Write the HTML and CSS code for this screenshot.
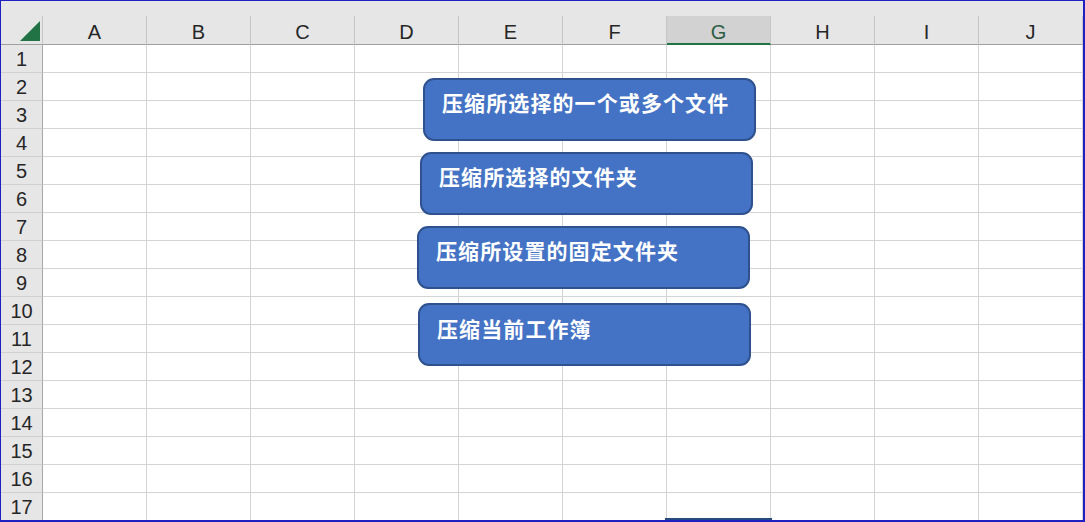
FILE: index.html
```html
<!DOCTYPE html>
<html lang="zh">
<head>
<meta charset="utf-8">
<title>Sheet</title>
<link rel="stylesheet" href="styles.css">
</head>
<body>
<div class="frame">
  <div class="strip"></div>
  <div class="sheet">
    <div class="corner"><svg width="42" height="28" viewBox="0 0 42 28"><polygon points="39,5 39,25 19,25" fill="#217346"/></svg></div>
    <div class="ch">A</div><div class="ch">B</div><div class="ch">C</div><div class="ch">D</div><div class="ch">E</div><div class="ch">F</div><div class="ch sel">G</div><div class="ch">H</div><div class="ch">I</div><div class="ch">J</div>

    <div class="rh">1</div><div class="c"></div><div class="c"></div><div class="c"></div><div class="c"></div><div class="c"></div><div class="c"></div><div class="c"></div><div class="c"></div><div class="c"></div><div class="c"></div>
    <div class="rh">2</div><div class="c"></div><div class="c"></div><div class="c"></div><div class="c"></div><div class="c"></div><div class="c"></div><div class="c"></div><div class="c"></div><div class="c"></div><div class="c"></div>
    <div class="rh">3</div><div class="c"></div><div class="c"></div><div class="c"></div><div class="c"></div><div class="c"></div><div class="c"></div><div class="c"></div><div class="c"></div><div class="c"></div><div class="c"></div>
    <div class="rh">4</div><div class="c"></div><div class="c"></div><div class="c"></div><div class="c"></div><div class="c"></div><div class="c"></div><div class="c"></div><div class="c"></div><div class="c"></div><div class="c"></div>
    <div class="rh">5</div><div class="c"></div><div class="c"></div><div class="c"></div><div class="c"></div><div class="c"></div><div class="c"></div><div class="c"></div><div class="c"></div><div class="c"></div><div class="c"></div>
    <div class="rh">6</div><div class="c"></div><div class="c"></div><div class="c"></div><div class="c"></div><div class="c"></div><div class="c"></div><div class="c"></div><div class="c"></div><div class="c"></div><div class="c"></div>
    <div class="rh">7</div><div class="c"></div><div class="c"></div><div class="c"></div><div class="c"></div><div class="c"></div><div class="c"></div><div class="c"></div><div class="c"></div><div class="c"></div><div class="c"></div>
    <div class="rh">8</div><div class="c"></div><div class="c"></div><div class="c"></div><div class="c"></div><div class="c"></div><div class="c"></div><div class="c"></div><div class="c"></div><div class="c"></div><div class="c"></div>
    <div class="rh">9</div><div class="c"></div><div class="c"></div><div class="c"></div><div class="c"></div><div class="c"></div><div class="c"></div><div class="c"></div><div class="c"></div><div class="c"></div><div class="c"></div>
    <div class="rh">10</div><div class="c"></div><div class="c"></div><div class="c"></div><div class="c"></div><div class="c"></div><div class="c"></div><div class="c"></div><div class="c"></div><div class="c"></div><div class="c"></div>
    <div class="rh">11</div><div class="c"></div><div class="c"></div><div class="c"></div><div class="c"></div><div class="c"></div><div class="c"></div><div class="c"></div><div class="c"></div><div class="c"></div><div class="c"></div>
    <div class="rh">12</div><div class="c"></div><div class="c"></div><div class="c"></div><div class="c"></div><div class="c"></div><div class="c"></div><div class="c"></div><div class="c"></div><div class="c"></div><div class="c"></div>
    <div class="rh">13</div><div class="c"></div><div class="c"></div><div class="c"></div><div class="c"></div><div class="c"></div><div class="c"></div><div class="c"></div><div class="c"></div><div class="c"></div><div class="c"></div>
    <div class="rh">14</div><div class="c"></div><div class="c"></div><div class="c"></div><div class="c"></div><div class="c"></div><div class="c"></div><div class="c"></div><div class="c"></div><div class="c"></div><div class="c"></div>
    <div class="rh">15</div><div class="c"></div><div class="c"></div><div class="c"></div><div class="c"></div><div class="c"></div><div class="c"></div><div class="c"></div><div class="c"></div><div class="c"></div><div class="c"></div>
    <div class="rh">16</div><div class="c"></div><div class="c"></div><div class="c"></div><div class="c"></div><div class="c"></div><div class="c"></div><div class="c"></div><div class="c"></div><div class="c"></div><div class="c"></div>
    <div class="rh">17</div><div class="c"></div><div class="c"></div><div class="c"></div><div class="c"></div><div class="c"></div><div class="c"></div><div class="c"></div><div class="c"></div><div class="c"></div><div class="c"></div>
  </div>

  <div class="shape s1">压缩所选择的一个或多个文件</div>
  <div class="shape s2">压缩所选择的文件夹</div>
  <div class="shape s3">压缩所设置的固定文件夹</div>
  <div class="shape s4">压缩当前工作簿</div>
  <div class="cursor"></div>
</div>
</body>
</html>
```

FILE: styles.css
```css
html, body {
  margin: 0;
  padding: 0;
  background: #ffffff;
}

.frame {
  position: relative;
  width: 1085px;
  height: 522px;
  box-sizing: border-box;
  border-style: solid;
  border-color: #1f1fc2;
  border-width: 1px 2px 2px 1px;
  overflow: hidden;
  background: #ffffff;
  font-family: "Liberation Sans", Arial, sans-serif;
}

.strip {
  height: 15px;
  background: #e6e6e6;
}

.sheet {
  display: grid;
  grid-template-columns: 42px repeat(10, 104px);
  grid-template-rows: 29px;
  grid-auto-rows: 28px;
}

.corner {
  box-sizing: border-box;
  background: #e6e6e6;
  border-right: 1px solid #c6c6c6;
  border-bottom: 1px solid #9f9f9f;
}

.corner svg {
  display: block;
}

.ch {
  box-sizing: border-box;
  background: #e6e6e6;
  border-right: 1px solid #c6c6c6;
  border-bottom: 1px solid #9f9f9f;
  padding-top: 5px;
  font-size: 20px;
  line-height: 23px;
  color: #262626;
  text-align: center;
}

.ch.sel {
  background: #d2d2d2;
  color: #2d5e44;
  border-bottom: 2px solid #217346;
}

.rh {
  box-sizing: border-box;
  background: #e6e6e6;
  border-right: 1px solid #a8a8a8;
  border-bottom: 1px solid #d0d0d0;
  font-size: 20px;
  line-height: 28px;
  color: #262626;
  text-align: center;
}

.c {
  box-sizing: border-box;
  border-right: 1px solid #d4d4d4;
  border-bottom: 1px solid #d4d4d4;
}

.shape {
  position: absolute;
  box-sizing: border-box;
  width: 333px;
  height: 63px;
  background: #4472c4;
  border: 2px solid #2f528f;
  border-radius: 11px;
  padding: 9px 0 0 17px;
  color: #ffffff;
  font-family: "Noto Sans CJK SC", "Noto Sans", sans-serif;
  font-weight: bold;
  font-size: 21px;
  line-height: 26px;
  letter-spacing: 1.1px;
}

.s1 { left: 422px; top: 77px; }
.s2 { left: 419px; top: 151px; }
.s3 { left: 416px; top: 225px; }
.s4 { left: 417px; top: 302px; padding-top: 10px; }

.cursor {
  position: absolute;
  left: 664px;
  top: 517px;
  width: 107px;
  height: 3px;
  background: #264a7e;
}
```
